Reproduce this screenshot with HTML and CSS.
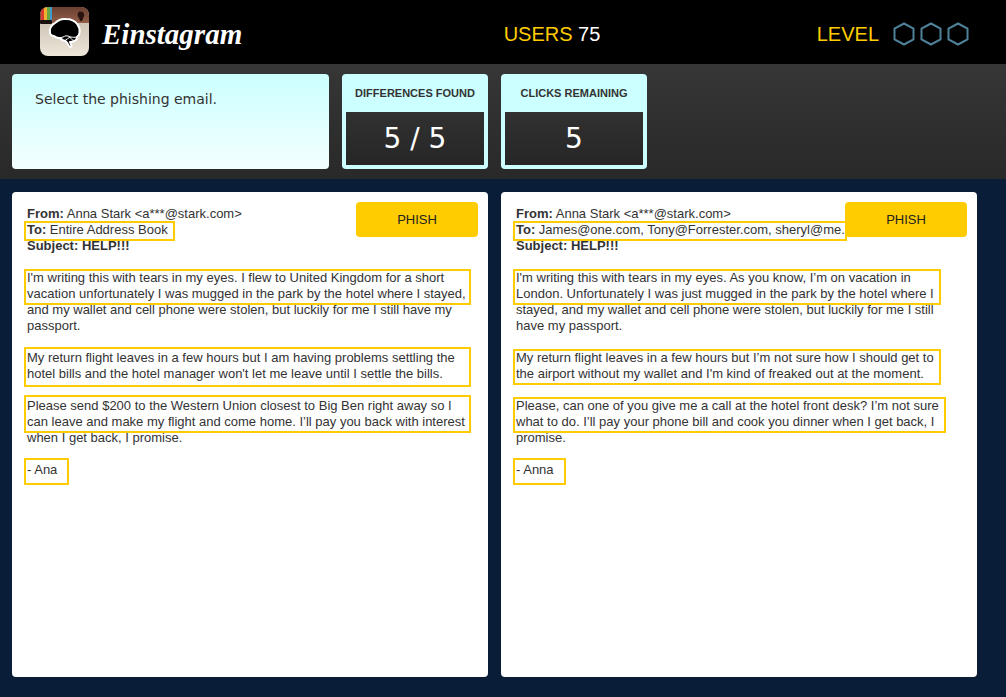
FILE: index.html
```html
<!DOCTYPE html>
<html lang="en">
<head>
<meta charset="utf-8">
<title>Einstagram</title>
<link rel="stylesheet" href="styles.css">
</head>
<body>
<header class="topbar">
  <div class="brand">
    <svg class="brand-icon" viewBox="0 0 50 50" aria-hidden="true">
      <defs>
        <linearGradient id="body" x2="0" y2="1"><stop offset="0" stop-color="#c9bfae"/><stop offset=".4" stop-color="#d3cabc"/><stop offset="1" stop-color="#eee7db"/></linearGradient>
        <linearGradient id="leather" x2="0" y2="1"><stop offset="0" stop-color="#6b4032"/><stop offset="1" stop-color="#915e49"/></linearGradient>
        <clipPath id="round"><rect x="1" y="0" width="49" height="49" rx="8"/></clipPath>
      </defs>
      <g clip-path="url(#round)">
        <rect width="50" height="50" fill="url(#body)"/>
        <rect width="50" height="16" fill="url(#leather)"/>
        <path d="M2 0h3v14H2z" fill="#d83c30"/><path d="M5 0h3v14H5z" fill="#efb32f"/><path d="M8 0h3v14H8z" fill="#65a844"/><path d="M11 0h2v14h-2z" fill="#3e9ccc"/>
        <rect x="1" y="13" width="12" height="4" rx="1" fill="#17100e"/>
        <path d="M39 6c1-2 5-2 6 1 1 2-1 3-1 5l-1 2h-2l-1-3c-1-1-2-3-1-5z" fill="#28130e"/>
      </g>
      <path d="M11 25.500C10 21 13 18 16 16c3-3 7-4.500 11-4 5 0 9 2 11.500 5.500 2 3 2.500 6 2 8.500-.5 2.500-1.500 3-2.500 4 0 2-1.500 4-4 4.500-1.500.5-2.500.3-3 .5l1.500 4c-.5 1.500-2 1.500-2.500 0-1-2.500-2-4-3.500-5-2.500 0-4-1-5-3-3 .5-5-.5-6.500-2-2-.3-4-1-4-3.500z" fill="#000" stroke="#fff" stroke-width="2" stroke-linejoin="round"/>
      <path d="M22 30.500c3-.2 4-2.500 7-1.500 3 1.500 6 1.500 9.500 1M26 33.500c2-1 3-2.500 5-3.500M31 30c1 2 2 3 4 3.500" fill="none" stroke="#fff"/>
    </svg>
    <span class="brand-name">Einstagram</span>
  </div>
  <div class="users">USERS <span class="users-count">75</span></div>
  <div class="level">
    <span>LEVEL</span>
    <svg class="hexes" viewBox="0 0 76 24" aria-hidden="true">
      <g fill="none" stroke="#4f8299" stroke-width="2">
        <path id="hex" d="M11 1.500l9.500 5.200v10.600L11 22.500l-9.500-5.200V6.700z"/>
        <use href="#hex" x="27"/><use href="#hex" x="54"/>
      </g>
    </svg>
  </div>
</header>

<section class="status columns">
  <div class="status-left">
    <p class="instruction">Select the phishing email.</p>
    <div class="stat"><h2 class="stat-label">DIFFERENCES FOUND</h2><div class="stat-value">5 / 5</div></div>
  </div>
  <div class="status-right">
    <div class="stat"><h2 class="stat-label">CLICKS REMAINING</h2><div class="stat-value">5</div></div>
  </div>
</section>

<main class="emails columns">
  <article class="email">
    <button class="phish" type="button">PHISH</button>
    <div><b>From:</b> Anna Stark &lt;a***@stark.com&gt;</div>
    <div class="spot"><b>To:</b> Entire Address Book</div>
    <div><b>Subject: HELP!!!</b></div>
    <p><span class="spot wide">I'm writing this with tears in my eyes. I flew to United Kingdom for a short<br>vacation unfortunately I was mugged in the park by the hotel where I stayed,</span>
    and my wallet and cell phone were stolen, but luckily for me I still have my<br>passport.</p>
    <p><span class="spot wide roomy">My return flight leaves in a few hours but I am having problems settling the<br>hotel bills and the hotel manager won't let me leave until I settle the bills.</span></p>
    <p><span class="spot wide raised">Please send $200 to the Western Union closest to Big Ben right away so I<br>can leave and make my flight and come home. I’ll pay you back with interest</span>
    when I get back, I promise.</p>
    <p><span class="spot sign">- Ana</span></p>
  </article>
  <article class="email">
    <button class="phish" type="button">PHISH</button>
    <div><b>From:</b> Anna Stark &lt;a***@stark.com&gt;</div>
    <div class="spot tight"><b>To:</b> James@one.com, Tony@Forrester.com, sheryl@me.</div>
    <div><b>Subject: HELP!!!</b></div>
    <p><span class="spot">I'm writing this with tears in my eyes. As you know, I’m on vacation in<br>London. Unfortunately I was just mugged in the park by the hotel where I</span>
    stayed, and my wallet and cell phone were stolen, but luckily for me I still<br>have my passport.</p>
    <p><span class="spot">My return flight leaves in a few hours but I’m not sure how I should get to<br>the airport without my wallet and I'm kind of freaked out at the moment.</span></p>
    <p><span class="spot">Please, can one of you give me a call at the hotel front desk? I’m not sure<br>what to do. I’ll pay your phone bill and cook you dinner when I get back, I</span>
    promise.</p>
    <p><span class="spot sign">- Anna</span></p>
  </article>
</main>
</body>
</html>
```
FILE: styles.css
```css
* { box-sizing: border-box; }

body {
  margin: 0;
  min-height: 100vh;
  display: flex;
  flex-direction: column;
  background: #0a1d38;
  color: #333;
  font: 13px/16px "Liberation Sans", Arial, sans-serif;
}

.topbar {
  display: grid;
  grid-template-columns: 1fr auto 1fr;
  align-items: center;
  height: 64px;
  padding: 0 37px 0 39px;
  background: #000;
  color: #fc0;
  font-size: 20px;
  line-height: 24px;
}
.brand { display: flex; align-items: center; gap: 13px; }
.brand-icon { width: 50px; height: 50px; }
.brand-name {
  color: #fff;
  font: italic bold 29px/40px "Brush Script MT", "Liberation Serif", cursive;
  padding-top: 4px;
}
.users { padding: 3px 0 0 96px; }
.users-count { color: #fff; }
.level { display: flex; justify-content: flex-end; align-items: center; gap: 14px; padding-top: 3px; }
.hexes { width: 76px; height: 24px; }

.columns {
  display: grid;
  grid-template-columns: 1fr 1fr;
  gap: 13px;
  padding: 10px 29px 10px 12px;
}
.status { background: linear-gradient(#363636, #292929); }
.status-left, .status-right { display: flex; gap: 13px; }
.instruction {
  flex: 1;
  margin: 0;
  padding: 15px 23px;
  border-radius: 4px;
  background: linear-gradient(#cff, #f4ffff);
  font: 14px/20px "DejaVu Sans", sans-serif;
}
.stat {
  width: 146px;
  padding: 0 4px 4px;
  border-radius: 4px;
  background: #cff;
  text-align: center;
}
.stat-label { margin: 0; font-size: 11px; line-height: 38px; white-space: nowrap; }
.stat-value {
  background: linear-gradient(#313131, #262626);
  color: #fff;
  font: 28px/53px "DejaVu Sans", sans-serif;
}

.emails { flex: 1; padding-top: 13px; padding-bottom: 20px; }
.email {
  position: relative;
  min-width: 0;
  padding: 14px 15px;
  border-radius: 4px;
  background: #fff;
}
.email p { margin: 16px 0; }
.phish {
  position: absolute;
  z-index: 1;
  top: 10px;
  right: 10px;
  width: 122px;
  height: 35px;
  border: 0;
  border-radius: 4px;
  background: #fc0;
  color: #222;
  font: 13px/16px "Liberation Sans", Arial, sans-serif;
}

/* A found difference, framed over the text */
.spot { display: block; position: relative; width: fit-content; }
.spot::after {
  content: "";
  position: absolute;
  inset: -1px -7px -3px -3px;
  border: 2px solid #fc0;
}
.wide { width: auto; }
.wide::after { right: 2px; }
.roomy::after { top: -3px; bottom: -5px; }
.raised::after { top: -3px; }
.tight::after { right: -2px; }
.sign::after { top: -4px; right: -12px; bottom: -7px; }
```
